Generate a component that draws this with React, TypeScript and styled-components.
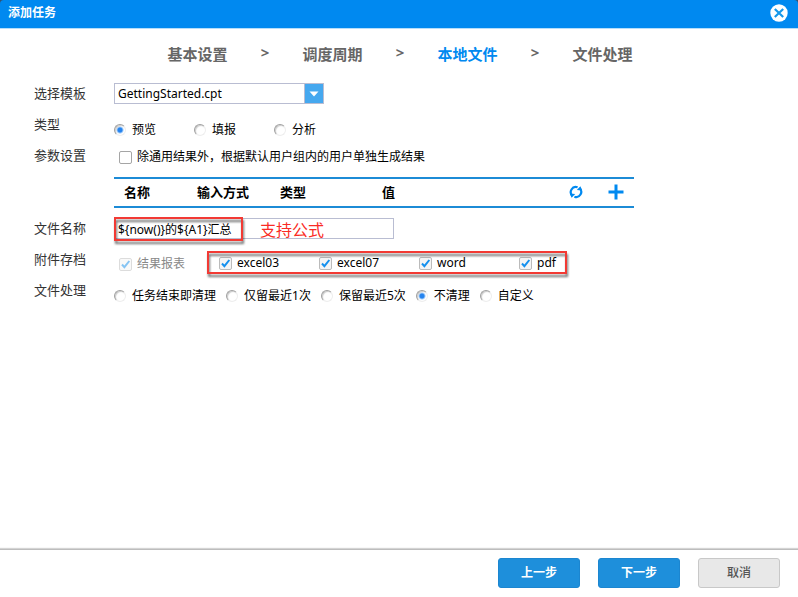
import React from 'react';
import styled, { createGlobalStyle, css } from 'styled-components';

const GlobalStyle = createGlobalStyle`
  * { box-sizing: border-box; }
  body {
    margin: 0;
    background: #fff;
    color: #000;
    font-family: "Noto Sans", "Noto Sans CJK SC", sans-serif;
    font-size: 12px;
    line-height: 20px;
  }
  button, input, select { font: inherit; color: inherit; margin: 0; }
`;

const Dialog = styled.div`
  display: flex;
  flex-direction: column;
  min-height: 100vh;
`;

const HeaderEdge = styled.div`
  background: #34506e;
`;

const Header = styled.header`
  display: flex;
  align-items: center;
  justify-content: space-between;
  height: 29px;
  padding: 0 10px 2px 8px;
  border-bottom: 1px solid #b5defb;
  border-radius: 4px 4px 0 0;
  background: #0089f0;
`;

const Title = styled.h1`
  margin: 0;
  color: #fff;
  font-size: 12px;
  font-weight: 700;
`;

const CloseButton = styled.button`
  display: flex;
  padding: 0;
  border: 0;
  background: none;
  cursor: pointer;
`;

const Steps = styled.ol`
  display: flex;
  justify-content: center;
  margin: 0;
  padding: 14px 0 14px 2px;
  list-style: none;
  font-size: 15px;
  font-weight: 700;
  line-height: 22px;
  color: #666;
`;

const Step = styled.li<{ $active?: boolean }>`
  display: flex;
  color: ${p => (p.$active ? '#0089f0' : 'inherit')};
`;

const Arrow = styled.span`
  width: 75px;
  color: #666;
  line-height: 18px;
  text-align: center;
`;

const Form = styled.form`
  flex: 1;
  padding: 0 34px;
`;

const Row = styled.div`
  display: grid;
  grid-template-columns: 80px minmax(0, 1fr);
  min-height: 31px;
`;

const RowLabel = styled.div`
  padding-top: 4px;
  color: #333;
  font-size: 13px;
`;

const Controls = styled.div<{ $gap?: number; $top?: number }>`
  display: flex;
  align-items: flex-start;
  gap: ${p => p.$gap ?? 0}px;
  padding-top: ${p => p.$top ?? 4}px;
`;

const SelectBox = styled.div`
  display: grid;
  width: 210px;
  height: 21px;
  border: 1px solid #b9bdd2;
  background: #fff;
`;

const Select = styled.select`
  grid-area: 1 / 1;
  appearance: none;
  padding: 0 22px 0 3px;
  border: 0;
  background: none;
  line-height: 19px;
`;

const SelectArrow = styled.span`
  grid-area: 1 / 1;
  justify-self: end;
  display: flex;
  align-items: center;
  justify-content: center;
  width: 19px;
  border-left: 1px solid #b9bdd2;
  background: #45a8ef;
  pointer-events: none;
`;

const Choice = styled.label<{ $width?: number; $disabled?: boolean }>`
  display: flex;
  align-items: center;
  gap: 6px;
  ${p => p.$width && css`width: ${p.$width}px;`}
  color: ${p => (p.$disabled ? '#888' : '#000')};
  white-space: nowrap;
`;

const Radio = styled.input.attrs({ type: 'radio' })`
  appearance: none;
  width: 12px;
  height: 12px;
  border: 1px solid;
  border-color: #a0a0a0 #eee #eee #a0a0a0;
  border-radius: 50%;
  box-shadow: inset 1px 1px 1px #ccc;
  background: #fff;
  &:checked {
    background: radial-gradient(circle at center, #2583ee 2px, #9cc8f8 3px, #fff 4px);
  }
`;

const CheckSlot = styled.span`
  display: grid;
  width: 13px;
  height: 13px;
  margin-right: -1px;
  svg { grid-area: 1 / 1; pointer-events: none; visibility: hidden; }
  input:checked + svg { visibility: visible; }
  input:disabled, input:disabled + svg { opacity: 0.5; }
`;

const CheckInput = styled.input.attrs({ type: 'checkbox' })`
  grid-area: 1 / 1;
  appearance: none;
  width: 13px;
  height: 13px;
  border: 1px solid #a5a5a5;
  border-radius: 2px;
  background: #fff;
  &:checked { border-color: #bbb; background: #f4f4f4; }
`;

const FieldIndent = styled.div<{ $top?: number }>`
  padding: ${p => p.$top ?? 0}px 0 0 5px;
`;

const ParamTable = styled.table`
  width: 520px;
  margin: 5px 0 6px 80px;
  border-collapse: separate;
  border-spacing: 0;
  border-top: 2px solid #1c8bd6;
  border-bottom: 2px solid #1c8bd6;
  table-layout: fixed;
`;

const Th = styled.th<{ $width: number; $action?: boolean }>`
  width: ${p => p.$width}px;
  height: 27px;
  padding: ${p => (p.$action ? '0 0 2px' : '0 0 2px 10px')};
  font-size: 13px;
  font-weight: 700;
  line-height: 18px;
  text-align: ${p => (p.$action ? 'center' : 'left')};
  vertical-align: middle;
`;

const IconButton = styled.button`
  display: flex;
  margin: 0 auto;
  padding: 0;
  border: 0;
  background: none;
  cursor: pointer;
`;

const NameField = styled.div`
  position: relative;
  width: 280px;
`;

const NameInput = styled.input`
  display: block;
  width: 100%;
  height: 21px;
  padding: 0 3px;
  border: 1px solid #b9bdd2;
  background: #fff;
  outline: 0;
`;

const outline = css`
  border: 2px solid #f23a34;
  filter: drop-shadow(1px 3px 1px rgba(0, 0, 0, 0.55));
  pointer-events: none;
`;

const NameOutline = styled.span`
  position: absolute;
  top: -1px;
  left: 0;
  width: 129px;
  height: 24px;
  ${outline}
`;

const Hint = styled.span`
  position: absolute;
  top: 0;
  left: 146px;
  color: #fa2b25;
  font-size: 16px;
  line-height: 24px;
  pointer-events: none;
`;

const FormatGroup = styled.div`
  position: relative;
  display: flex;
  padding-left: 12px;
  width: 360px;
  &::after {
    content: '';
    position: absolute;
    inset: -2px 0 -1px;
    ${outline}
  }
`;

const Footer = styled.footer`
  display: flex;
  justify-content: flex-end;
  gap: 18px;
  padding: 8px 18px 9px;
  border-top: 1px solid #bdbdbd;
  box-shadow: 0 -1px 1px #d4d4d4;
`;

const Button = styled.button<{ $plain?: boolean }>`
  width: 82px;
  height: 30px;
  padding: 0;
  border: 1px solid ${p => (p.$plain ? '#c8c8c8' : '#1c86d0')};
  border-radius: 3px;
  background: ${p => (p.$plain ? '#e8e8e8' : '#1e8fdb')};
  color: ${p => (p.$plain ? '#555' : '#fff')};
  font-weight: ${p => (p.$plain ? 500 : 700)};
  cursor: pointer;
`;

function Checkbox({ label, checked, disabled, width }: {
  label: string; checked?: boolean; disabled?: boolean; width?: number;
}) {
  return (
    <Choice $width={width} $disabled={disabled}>
      <CheckSlot>
        <CheckInput defaultChecked={checked} disabled={disabled} />
        <svg width="13" height="13" viewBox="0 0 13 13" fill="none">
          <path d="M3 6.5 5.4 9.2 10.3 3" stroke="#1590ee" strokeWidth="2" />
        </svg>
      </CheckSlot>
      {label}
    </Choice>
  );
}

const steps = ['基本设置', '调度周期', '本地文件', '文件处理'];
const types = ['预览', '填报', '分析'];
const formats = ['excel03', 'excel07', 'word', 'pdf'];
const cleanups = ['任务结束即清理', '仅留最近1次', '保留最近5次', '不清理', '自定义'];

export default function App() {
  return (
    <>
      <GlobalStyle />
      <Dialog role="dialog" aria-labelledby="title">
        <HeaderEdge>
          <Header>
            <Title id="title">添加任务</Title>
            <CloseButton aria-label="关闭">
              <svg width="18" height="18" viewBox="0 0 18 18">
                <circle cx="9" cy="9" r="8.7" fill="#fff" />
                <path d="M4.8 5 13.2 13M13.2 5 4.8 13" stroke="#1698ea" strokeWidth="2.2" />
              </svg>
            </CloseButton>
          </Header>
        </HeaderEdge>
        <Steps>
          {steps.map((s, i) => (
            <Step key={s} $active={i === 2} aria-current={i === 2 ? 'step' : undefined}>
              {s}
              {i < steps.length - 1 && <Arrow>&gt;</Arrow>}
            </Step>
          ))}
        </Steps>
        <Form onSubmit={e => e.preventDefault()}>
          <Row>
            <RowLabel as="label" htmlFor="template">选择模板</RowLabel>
            <Controls>
              <SelectBox>
                <Select id="template">
                  <option>GettingStarted.cpt</option>
                </Select>
                <SelectArrow>
                  <svg width="10" height="6" viewBox="0 0 10 6">
                    <path d="M0.5 0.5h9L5 5.5z" fill="#fff" />
                  </svg>
                </SelectArrow>
              </SelectBox>
            </Controls>
          </Row>
          <Row role="radiogroup" aria-labelledby="type-label">
            <RowLabel id="type-label">类型</RowLabel>
            <Controls $top={10}>
              {types.map((t, i) => (
                <Choice key={t} $width={80}>
                  <Radio name="type" defaultChecked={i === 0} />
                  {t}
                </Choice>
              ))}
            </Controls>
          </Row>
          <Row role="group" aria-labelledby="param-label">
            <RowLabel id="param-label">参数设置</RowLabel>
            <Controls $top={6}>
              <FieldIndent>
                <Checkbox label="除通用结果外，根据默认用户组内的用户单独生成结果" />
              </FieldIndent>
            </Controls>
          </Row>
          <ParamTable>
            <thead>
              <tr>
                <Th $width={73}>名称</Th>
                <Th $width={83}>输入方式</Th>
                <Th $width={102}>类型</Th>
                <Th $width={183}>值</Th>
                <Th $width={42} $action>
                  <IconButton type="button" aria-label="刷新">
                    <svg width="14" height="14" viewBox="0 0 14 14" fill="none">
                      <path d="M3.6 10.8A5 5 0 0 1 8.6 2.3M10.4 3.2A5 5 0 0 1 5.4 11.7" stroke="#0089f0" strokeWidth="2.2" />
                      <path d="M0.8 8.4 6.2 9 2.6 12.8z" fill="#0089f0" />
                      <path d="M13.2 5.6 7.8 5 11.4 1.2z" fill="#0089f0" />
                    </svg>
                  </IconButton>
                </Th>
                <Th $width={37} $action>
                  <IconButton type="button" aria-label="添加">
                    <svg width="16" height="16" viewBox="0 0 16 16">
                      <path d="M8 0.5v15M0.5 8h15" stroke="#0089f0" strokeWidth="3" />
                    </svg>
                  </IconButton>
                </Th>
              </tr>
            </thead>
          </ParamTable>
          <Row>
            <RowLabel as="label" htmlFor="filename">文件名称</RowLabel>
            <Controls>
              <NameField>
                <NameInput id="filename" defaultValue="${now()}的${A1}汇总" />
                <NameOutline />
                <Hint>支持公式</Hint>
              </NameField>
            </Controls>
          </Row>
          <Row role="group" aria-labelledby="attach-label">
            <RowLabel id="attach-label">附件存档</RowLabel>
            <Controls $gap={22} $top={8}>
              <FieldIndent $top={1}>
                <Checkbox label="结果报表" checked disabled />
              </FieldIndent>
              <FormatGroup>
                {formats.map(f => <Checkbox key={f} label={f} checked width={f === 'pdf' ? 40 : 100} />)}
              </FormatGroup>
            </Controls>
          </Row>
          <Row role="radiogroup" aria-labelledby="cleanup-label">
            <RowLabel id="cleanup-label">文件处理</RowLabel>
            <Controls $gap={10} $top={10}>
              {cleanups.map(c => (
                <Choice key={c}>
                  <Radio name="cleanup" defaultChecked={c === '不清理'} />
                  {c}
                </Choice>
              ))}
            </Controls>
          </Row>
        </Form>
        <Footer>
          <Button type="button">上一步</Button>
          <Button type="button">下一步</Button>
          <Button type="button" $plain>取消</Button>
        </Footer>
      </Dialog>
    </>
  );
}
